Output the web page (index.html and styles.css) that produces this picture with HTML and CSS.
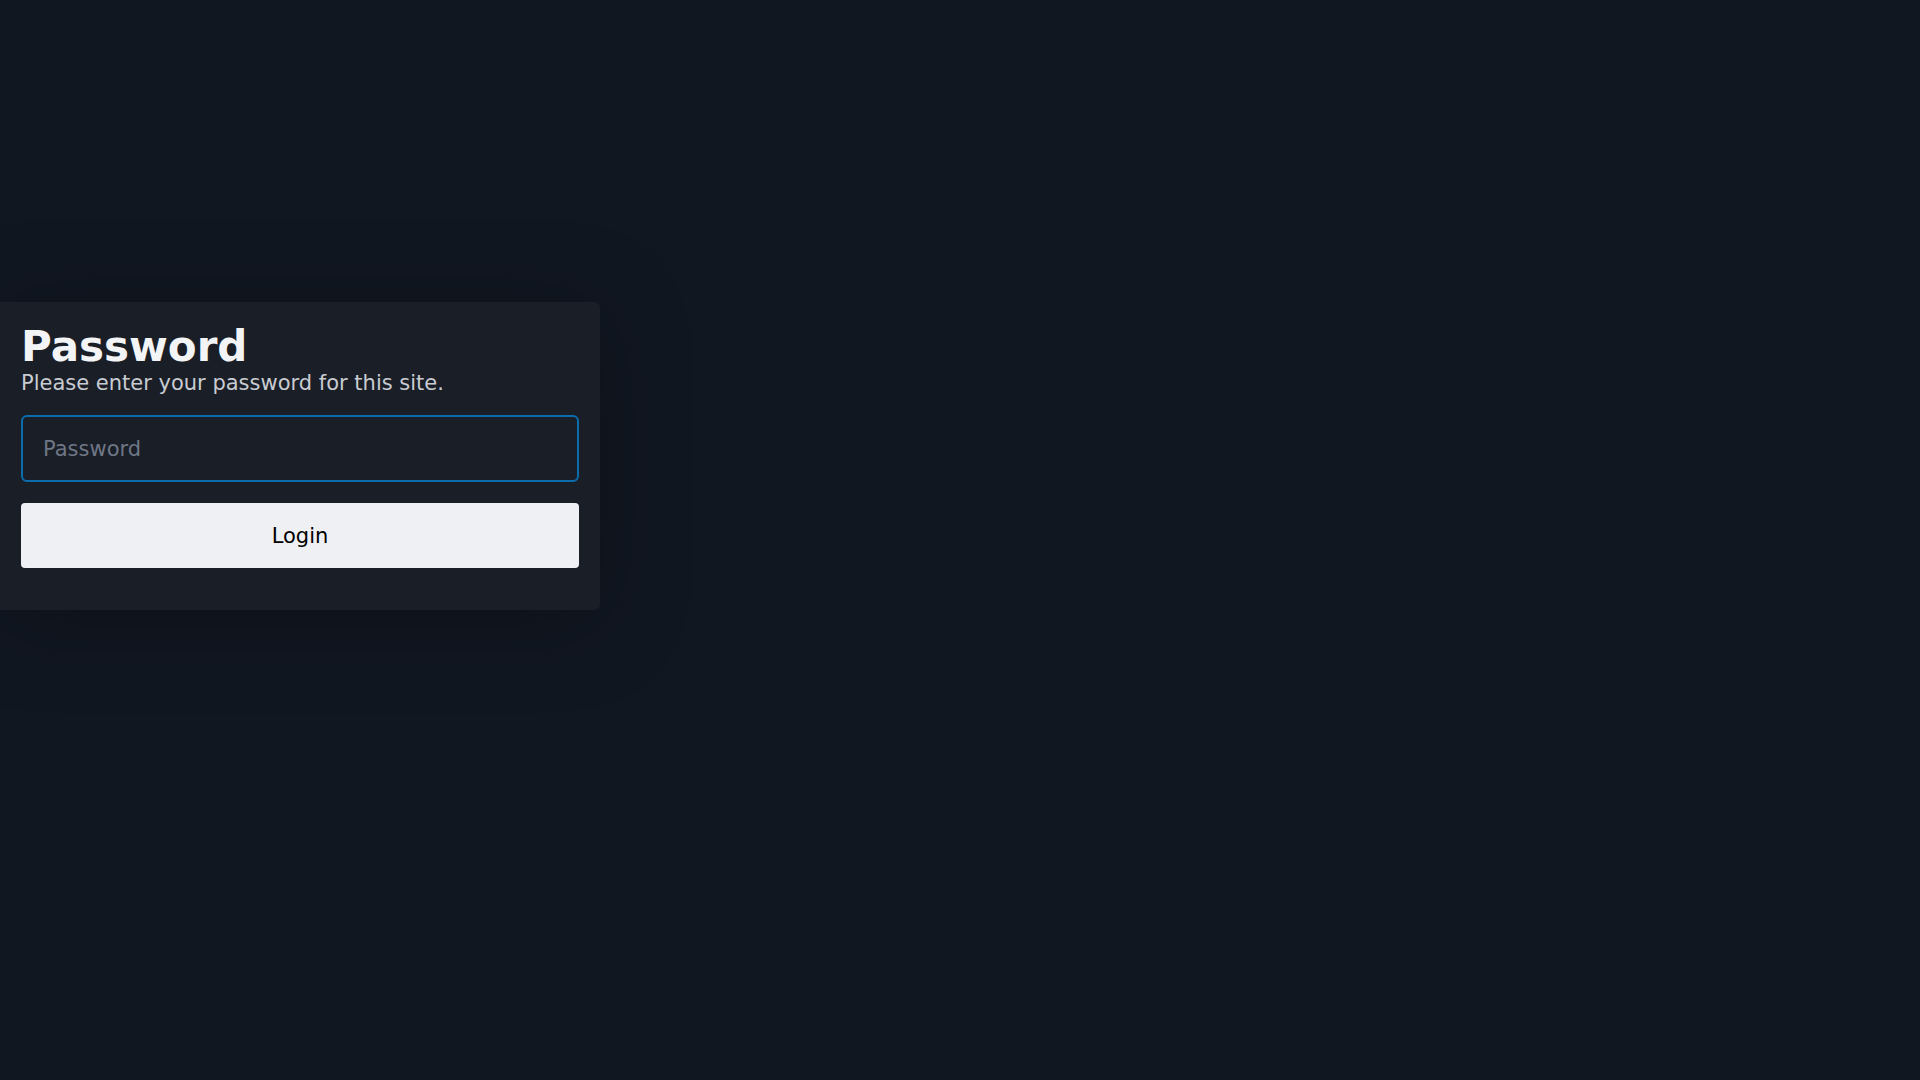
FILE: index.html
```html
<!DOCTYPE html>
<html lang="en">
<head>
<meta charset="utf-8">
<title>Password</title>
<link rel="stylesheet" href="styles.css">
</head>
<body>
<main class="page">
  <section class="card">
    <h1 class="title">Password</h1>
    <p class="subtitle">Please enter your password for this site.</p>
    <form class="form">
      <input class="input" type="password" placeholder="Password">
      <button class="button" type="button">Login</button>
    </form>
  </section>
</main>
</body>
</html>
```
FILE: styles.css
```css
html, body {
  margin: 0;
  padding: 0;
  background: #111721;
  font-family: "DejaVu Sans", sans-serif;
}
.page {
  min-height: 100vh;
  box-sizing: border-box;
  padding-top: 302px;
}
.card {
  width: 600px;
  box-sizing: border-box;
  background: #1a1e27;
  border-radius: 0 6px 6px 0;
  padding: 20px 21px 42px 21px;
  box-shadow: 0 10px 90px rgba(0, 0, 0, 0.28);
}
.title {
  margin: 0;
  font-size: 42px;
  font-weight: 700;
  line-height: normal;
  color: #f3f4f6;
}
.subtitle {
  margin: 0;
  font-size: 21px;
  line-height: normal;
  color: #c8ccd2;
}
.form {
  margin-top: 20px;
  display: flex;
  flex-direction: column;
  gap: 21px;
}
.input {
  box-sizing: border-box;
  width: 100%;
  height: 67px;
  padding: 0 20px;
  font-family: inherit;
  font-size: 21px;
  color: #f3f4f6;
  background: #1a1e27;
  border: 2px solid #0b6dad;
  border-radius: 6px;
  outline: none;
}
.input::placeholder {
  color: #6f7786;
}
.button {
  box-sizing: border-box;
  width: 100%;
  height: 65px;
  font-family: inherit;
  font-size: 21px;
  color: #000;
  background: #eff0f4;
  border: none;
  border-radius: 4px;
  cursor: pointer;
}
```
